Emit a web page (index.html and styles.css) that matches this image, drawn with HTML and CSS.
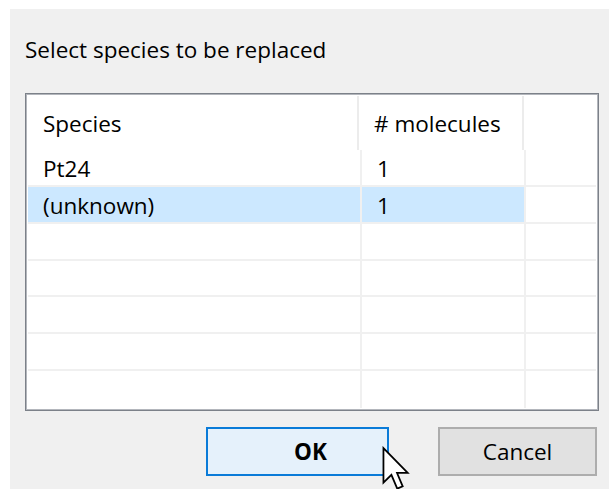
FILE: index.html
```html
<!DOCTYPE html>
<html>
<head>
<meta charset="utf-8">
<link rel="stylesheet" href="styles.css">
</head>
<body>
<div class="dialog">
  <div class="prompt">Select species to be replaced</div>
  <div class="list">
    <div class="list-head">
      <div class="hcell c1">Species</div>
      <div class="hcell c2"># molecules</div>
      <div class="hcell c3"></div>
    </div>
    <div class="list-body">
      <div class="row">
        <div class="cell c1">Pt24</div>
        <div class="cell c2">1</div>
        <div class="cell c3"></div>
      </div>
      <div class="row selected">
        <div class="cell c1">(unknown)</div>
        <div class="cell c2">1</div>
        <div class="cell c3"></div>
      </div>
      <div class="row"><div class="cell c1"></div><div class="cell c2"></div><div class="cell c3"></div></div>
      <div class="row"><div class="cell c1"></div><div class="cell c2"></div><div class="cell c3"></div></div>
      <div class="row"><div class="cell c1"></div><div class="cell c2"></div><div class="cell c3"></div></div>
      <div class="row"><div class="cell c1"></div><div class="cell c2"></div><div class="cell c3"></div></div>
      <div class="row last"><div class="cell c1"></div><div class="cell c2"></div><div class="cell c3"></div></div>
    </div>
  </div>
  <div class="buttons">
    <button class="btn btn-default">OK</button>
    <button class="btn btn-cancel">Cancel</button>
    <svg class="pointer" width="30" height="46" viewBox="0 0 14 22">
      <path d="M1 1 L1 17.5 L4.8 13.8 L7.6 20.4 L10.2 19.3 L7.5 12.9 L12.6 12.9 Z" fill="#fff" stroke="#000" stroke-width="0.85" stroke-linejoin="miter"/>
    </svg>
  </div>
</div>
</body>
</html>
```

FILE: styles.css
```css
html, body {
  margin: 0;
  padding: 0;
  background: #ffffff;
}

body {
  width: 609px;
  height: 489px;
  overflow: hidden;
  font-family: "Open Sans", "Noto Sans", "DejaVu Sans", sans-serif;
  font-size: 22.5px;
  color: #000;
}

.dialog {
  margin: 9px 0 0 10px;
  height: 480px;
  background: #f0f0f0;
  padding: 0 10px 0 15px;
  box-sizing: border-box;
  display: flex;
  flex-direction: column;
}

.prompt {
  height: 28px;
  line-height: 28px;
  margin-top: 27px;
}

.list {
  margin-top: 29px;
  width: 574px;
  height: 318px;
  box-sizing: border-box;
  border: 1px solid #7c8189;
  box-shadow: inset 0 0 0 1px #b3b6bc;
  background: #ffffff;
  padding: 2px;
  display: flex;
  flex-direction: column;
}

.list-head {
  height: 54px;
  display: flex;
  flex: none;
}

.hcell {
  height: 100%;
  box-sizing: border-box;
  padding: 15px 0 0 15px;
  line-height: 26px;
  border-right: 2px solid #ececec;
}

.hcell.c1 { width: 331px; }
.hcell.c2 { width: 165px; }
.hcell.c3 { flex: 1; border-right: none; }

.list-body {
  flex: 1;
  display: grid;
  grid-template-rows: repeat(7, 1fr);
}

.row {
  display: flex;
  border-bottom: 2px solid #f0f0f0;
}

.row.last {
  border-bottom: none;
}

.cell {
  box-sizing: border-box;
  padding: 3px 0 0 15px;
  display: flex;
  align-items: center;
  border-right: 2px solid #f0f0f0;
}

.cell.c1 { width: 334px; }
.cell.c2 { width: 164px; }
.cell.c3 { flex: 1; border-right: none; }

.row.selected .c1,
.row.selected .c2 {
  background: #cce8ff;
}

.buttons {
  position: relative;
  margin-top: 16px;
  display: flex;
  justify-content: flex-end;
  gap: 49px;
  padding-right: 2px;
}

.btn {
  height: 49px;
  box-sizing: border-box;
  font-family: inherit;
  font-size: 22.5px;
  color: #000;
  padding: 0;
  margin: 0;
}

.btn-default {
  width: 183px;
  padding-left: 26px;
  background: #e5f1fb;
  border: 2px solid #0a7bd8;
  font-weight: 700;
}

.btn-cancel {
  width: 159px;
  background: #e1e1e1;
  border: 2px solid #adadad;
}

.pointer {
  position: absolute;
  left: 356px;
  top: 19px;
}
```
